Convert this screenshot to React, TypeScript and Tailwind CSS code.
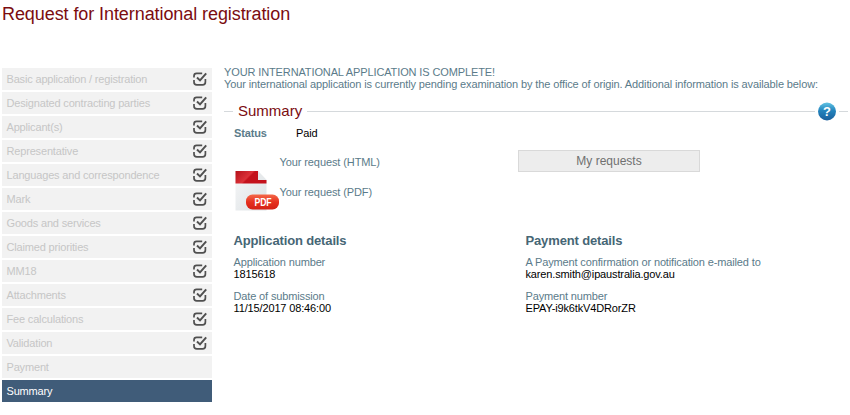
const STEPS = [
  { label: "Basic application / registration", done: true },
  { label: "Designated contracting parties", done: true },
  { label: "Applicant(s)", done: true },
  { label: "Representative", done: true },
  { label: "Languages and correspondence", done: true },
  { label: "Mark", done: true },
  { label: "Goods and services", done: true },
  { label: "Claimed priorities", done: true },
  { label: "MM18", done: true },
  { label: "Attachments", done: true },
  { label: "Fee calculations", done: true },
  { label: "Validation", done: true },
  { label: "Payment", done: false },
  { label: "Summary", done: false, active: true },
];

const DETAILS = [
  {
    title: "Application details",
    width: "w-[292px]",
    fields: [
      { label: "Application number", value: "1815618" },
      { label: "Date of submission", value: "11/15/2017 08:46:00" },
    ],
  },
  {
    title: "Payment details",
    width: "w-[300px]",
    fields: [
      { label: "A Payment confirmation or notification e-mailed to", value: "karen.smith@ipaustralia.gov.au" },
      { label: "Payment number", value: "EPAY-i9k6tkV4DRorZR" },
    ],
  },
];

function CheckIcon() {
  return (
    <svg className="mr-[5px] shrink-0" width="14" height="14" viewBox="0 0 14 14" fill="none" stroke="#505050">
      <path d="M1 5.6V4Q1 1.400 3.600 1.400H9.200M1 8V10Q1 12.900 3.800 12.900H9.600Q12.400 12.900 12.400 10V7" strokeWidth="1.7" />
      <path d="M4 5.600L7 8.400L13.200 1.400" strokeWidth="2" />
    </svg>
  );
}

function PdfIcon() {
  return (
    <svg className="shrink-0" width="45" height="42" viewBox="0 0 45 42">
      <defs>
        <linearGradient id="page" x1="0" y1="0" x2="1" y2="1">
          <stop offset="0" stopColor="#f5f6f7" />
          <stop offset="1" stopColor="#dde2e5" />
        </linearGradient>
        <linearGradient id="band" x1="0" y1="0" x2="1" y2="0.4">
          <stop offset="0" stopColor="#b5121b" />
          <stop offset="0.5" stopColor="#dc3238" />
          <stop offset="0.56" stopColor="#c4121c" />
          <stop offset="1" stopColor="#c4121c" />
        </linearGradient>
        <linearGradient id="pill" x1="0" y1="0" x2="0" y2="1">
          <stop offset="0" stopColor="#f4694a" />
          <stop offset="0.5" stopColor="#e6301e" />
          <stop offset="1" stopColor="#d42014" />
        </linearGradient>
      </defs>
      <path d="M1.500 1H24L32.500 10V40.500H1.500Z" fill="url(#page)" />
      <path d="M1.500 1H24V10H32.500V13.500H1.500Z" fill="url(#band)" />
      <path d="M24 1L32.500 10H24Z" fill="#e6e9eb" />
      <rect x="12" y="24.500" width="33" height="15" rx="6.500" fill="url(#pill)" />
      <text x="29" y="35.500" textAnchor="middle" textLength="17" lengthAdjust="spacingAndGlyphs" fill="#fff" fontSize="10" fontWeight="700" fontFamily="Liberation Sans, sans-serif">PDF</text>
    </svg>
  );
}

function HelpIcon() {
  return (
    <svg className="mx-[2px] shrink-0" width="20" height="20" viewBox="0 0 20 20">
      <defs>
        <linearGradient id="help" x1="0" y1="0" x2="0" y2="1">
          <stop offset="0" stopColor="#62c4e4" />
          <stop offset="0.45" stopColor="#2384bd" />
          <stop offset="1" stopColor="#1b5f9c" />
        </linearGradient>
      </defs>
      <circle cx="10" cy="10.500" r="9" fill="url(#help)" />
      <text x="10" y="15" textAnchor="middle" fill="#fff" fontSize="13" fontWeight="700" fontFamily="Liberation Sans, sans-serif">?</text>
    </svg>
  );
}

export default function App() {
  return (
    <div className="h-[415px] w-[850px] overflow-hidden bg-white font-['Liberation_Sans',Arial,sans-serif] text-[11px] leading-3 tracking-[-0.14px] text-[#5b7b8a]">
      <h1 className="h-[68px] pt-[3px] pl-[2px] text-[18px] leading-[22px] tracking-[-0.08px] text-[#7b0c10]">
        Request for International registration
      </h1>

      <div className="flex">
        {/* Wizard steps */}
        <nav className="ml-[2px] flex w-[209.5px] shrink-0 flex-col gap-[2px] tracking-[-0.17px]">
          {STEPS.map((s) => (
            <div
              key={s.label}
              className={`flex h-[22px] items-center justify-between pl-[4.5px] ${
                s.active ? "bg-[#405c79] text-white" : "bg-[#f2f2f2] text-[#c6c6c6]"
              }`}
            >
              <span>{s.label}</span>
              {s.done && <CheckIcon />}
            </div>
          ))}
        </nav>

        <main className="ml-[12.5px] w-[624px] shrink-0">
          <div className="-mt-[2px] tracking-[-0.12px] whitespace-nowrap">
            <p>YOUR INTERNATIONAL APPLICATION IS COMPLETE!</p>
            <p>Your international application is currently pending examination by the office of origin. Additional information is available below:</p>
          </div>

          <div className="mt-[10px] flex h-[22px] items-center">
            <div className="h-px w-[9px] bg-[#d5d9dc]" />
            <h2 className="mx-[5px] text-[15px] leading-5 tracking-normal text-[#7b0c10]">Summary</h2>
            <div className="h-px flex-1 bg-[#d5d9dc]" />
            <HelpIcon />
            <div className="h-px w-[9px] bg-[#d5d9dc]" />
          </div>

          <div className="mt-[5px] flex pl-[10px]">
            <span className="w-[62px] font-bold">Status</span>
            <span className="text-black">Paid</span>
          </div>

          <div className="mt-[11px] flex h-[62px] pl-[10px]">
            <div className="pt-[20px]">
              <PdfIcon />
            </div>
            <div className="w-[239px] pt-[6px] pl-[0.5px] tracking-[-0.1px]">
              <p>Your request (HTML)</p>
              <p className="mt-[18px]">Your request (PDF)</p>
            </div>
            <button className="h-[22px] w-[182px] border border-[#d9d9d9] bg-[#ededed] text-[12px] leading-5 tracking-normal text-[#707070]">
              My requests
            </button>
          </div>

          <div className="mt-[21px] flex pl-[9.5px]">
            {DETAILS.map((d) => (
              <section key={d.title} className={d.width}>
                <h3 className="text-[13px] leading-4 font-bold text-[#466675]">{d.title}</h3>
                {d.fields.map((f, i) => (
                  <div key={f.label} className={i === 0 ? "mt-[7px]" : "mt-[10px]"}>
                    <p>{f.label}</p>
                    <p className="text-black">{f.value}</p>
                  </div>
                ))}
              </section>
            ))}
          </div>
        </main>
      </div>
    </div>
  );
}
